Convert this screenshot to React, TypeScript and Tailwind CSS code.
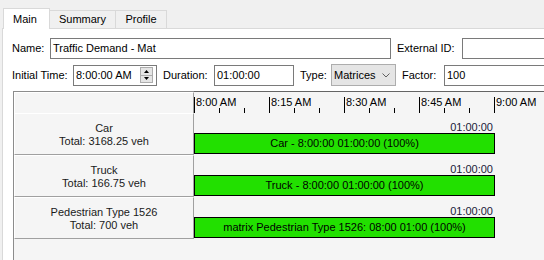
import React from "react";

const rows = [
  { name: "Car", total: "Total: 3168.25 veh", bar: "Car - 8:00:00 01:00:00 (100%)" },
  { name: "Truck", total: "Total: 166.75 veh", bar: "Truck - 8:00:00 01:00:00 (100%)" },
  {
    name: "Pedestrian Type 1526",
    total: "Total: 700 veh",
    bar: "matrix Pedestrian Type 1526: 08:00 01:00 (100%)",
  },
];

const hours = ["8:00 AM", "8:15 AM", "8:30 AM", "8:45 AM", "9:00 AM"];

const Spinner = () => (
  <div className="w-[13px] h-[16px] border border-[#adadad] bg-[#e5e5e5] flex flex-col mr-[3px] shrink-0">
    <div className="flex-1 flex items-center justify-center border-b border-[#adadad]">
      <svg width="5" height="3" viewBox="0 0 5 3">
        <path d="M2.5 0 L5 3 L0 3 Z" fill="#000" />
      </svg>
    </div>
    <div className="flex-1 flex items-center justify-center">
      <svg width="5" height="3" viewBox="0 0 5 3">
        <path d="M0 0 L5 0 L2.5 3 Z" fill="#000" />
      </svg>
    </div>
  </div>
);

export default function App() {
  return (
    <div
      className="w-[544px] h-[260px] overflow-hidden bg-[#f0f0f0] pl-[2px] text-[11px] leading-[13px] text-black"
      style={{ fontFamily: '"Liberation Sans", Arial, sans-serif' }}
    >
      {/* tabs */}
      <div className="h-[28px] flex items-end pl-[1px] relative z-10">
        <div className="w-[47px] h-[21px] -mb-px bg-white border border-b-0 border-[#d9d9d9] pl-[9px] pt-[4px] shrink-0">
          Main
        </div>
        <div className="h-[18px] w-[66px] border-t border-r border-[#d9d9d9] flex items-center justify-center shrink-0">
          Summary
        </div>
        <div className="h-[18px] w-[51px] border-t border-r border-[#d9d9d9] flex items-center justify-center shrink-0">
          Profile
        </div>
      </div>

      {/* content panel */}
      <div className="h-[232px] overflow-hidden bg-white border-l border-t border-[#d9d9d9] pl-[9px] pt-[9px]">
        <div className="flex items-center h-[21px] whitespace-nowrap">
          <span className="w-[38px] shrink-0">Name:</span>
          <div className="w-[341px] h-[21px] border border-[#7a7a7a] bg-white pl-[2px] flex items-center shrink-0">
            Traffic Demand - Mat
          </div>
          <span className="ml-[6px] w-[65px] shrink-0">External ID:</span>
          <div className="w-[120px] h-[21px] border border-[#7a7a7a] bg-white shrink-0" />
        </div>

        <div className="flex items-center h-[22px] mt-[5px] whitespace-nowrap">
          <span className="w-[61px] shrink-0">Initial Time:</span>
          <div className="w-[84px] h-[21px] border border-[#7a7a7a] bg-white pl-[2px] flex items-center justify-between shrink-0">
            <span>8:00:00 AM</span>
            <Spinner />
          </div>
          <span className="ml-[6px] w-[51px] shrink-0">Duration:</span>
          <div className="w-[80px] h-[21px] border border-[#7a7a7a] bg-white pl-[2px] flex items-center shrink-0">
            01:00:00
          </div>
          <span className="ml-[6px] w-[31px] shrink-0">Type:</span>
          <div className="w-[65px] h-[22px] border border-[#adadad] bg-[#e5e5e5] pl-[2px] pr-[5px] flex items-center justify-between shrink-0">
            <span>Matrices</span>
            <svg width="8" height="5" viewBox="0 0 8 5">
              <path d="M0.5 0.5 L4 4 L7.5 0.5" fill="none" stroke="#606060" strokeWidth="1" />
            </svg>
          </div>
          <span className="ml-[6px] w-[42px] shrink-0">Factor:</span>
          <div className="w-[120px] h-[21px] border border-[#7a7a7a] bg-white pl-[2px] flex items-center shrink-0">
            100
          </div>
        </div>

        {/* schedule table */}
        <div className="ml-[1px] mt-[5px] w-[560px] h-[200px] border-l border-t border-[#8c8c8c] bg-[#f5f5f5]">
          {/* header */}
          <div className="flex h-[21px]">
            <div className="w-[180px] shrink-0 border-l border-t border-white border-r border-r-[#a0a0a0]" />
            <div className="relative w-[350px] shrink-0 border-t border-[#646464] -mt-px">
              <svg className="absolute left-0 top-0" width="350" height="22">
                {[0, 75, 150, 225, 300].map((x) => (
                  <line key={x} x1={x + 0.5} y1="5" x2={x + 0.5} y2="21" stroke="#000" />
                ))}
                {[25, 50, 100, 125, 175, 200, 250, 275].map((x) => (
                  <line key={x} x1={x + 0.5} y1="16" x2={x + 0.5} y2="21" stroke="#000" />
                ))}
              </svg>
              <div className="flex pt-[4px]">
                {hours.map((h) => (
                  <span key={h} className="w-[75px] pl-[2px] shrink-0">
                    {h}
                  </span>
                ))}
              </div>
            </div>
          </div>

          {rows.map((r) => (
            <div key={r.name} className="flex h-[42px]">
              <div className="w-[180px] shrink-0 border-l border-t border-white border-b border-b-[#a0a0a0] border-r border-r-[#a0a0a0] flex flex-col items-center justify-center pt-[1px] text-[#1a1a1a]">
                <span>{r.name}</span>
                <span>{r.total}</span>
              </div>
              <div className="w-[301px] shrink-0 flex flex-col pb-[1px]">
                <div className="h-[20px] flex items-end justify-end pr-[2px] text-[#202038]">
                  <span className="relative top-[1px]">01:00:00</span>
                </div>
                <div className="h-[21px] border border-black bg-[#22e000] flex items-center justify-center whitespace-nowrap">
                  {r.bar}
                </div>
              </div>
            </div>
          ))}
        </div>
      </div>
    </div>
  );
}
